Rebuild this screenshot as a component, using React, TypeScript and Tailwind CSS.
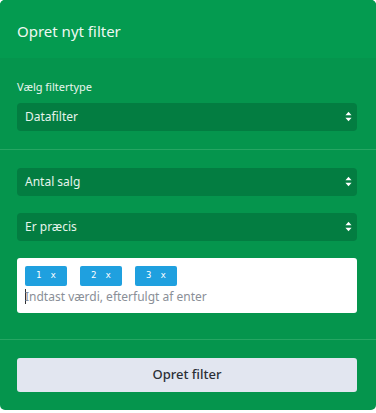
import React from 'react'

const Chevrons = () => (
  <svg viewBox="0 0 8 12" className="h-[11px] w-[7px]" fill="currentColor" aria-hidden="true">
    <path d="M4 0.5 7.5 4.5H0.5Z" />
    <path d="M4 11.5 0.5 7.5H7.5Z" />
  </svg>
)

const Select = ({ label }: { label: string }) => (
  <div className="flex h-[28px] items-center justify-between rounded-[4px] bg-[#037d41] pl-2 pr-[5px] text-[12px] text-[#e6f4ec]">
    <span>{label}</span>
    <span className="text-white">
      <Chevrons />
    </span>
  </div>
)

const Chip = ({ value }: { value: string }) => (
  <span className="inline-flex h-[20px] w-[42px] items-center justify-center gap-[9px] rounded-[2px] bg-[#1fa0df] font-['DejaVu_Sans_Mono',monospace] text-[9px] text-white">
    <span>{value}</span>
    <span>x</span>
  </span>
)

export default function App() {
  return (
    <div className="h-[413px] w-[376px] bg-white font-['Noto_Sans',sans-serif]">
      <div className="h-[410px] w-[376px] overflow-hidden rounded-[5px] bg-[#05954d]">
        <div className="flex h-[58px] items-center bg-[#049b50] pl-[17px] pt-[4px] text-[15px] text-[#eef8f2]">
          Opret nyt filter
        </div>
        <div className="pl-[17px] pr-[19px] pt-[21px] pb-[18px]">
          <div className="mb-[7px] text-[11px] text-[#e8f5ee]">Vælg filtertype</div>
          <Select label="Datafilter" />
        </div>
        <div className="h-px bg-[#26a663]" />
        <div className="flex flex-col gap-[17px] pl-[17px] pr-[19px] pt-[18px] pb-[26px]">
          <Select label="Antal salg" />
          <Select label="Er præcis" />
          <div className="flex h-[55px] flex-col rounded-[3px] bg-white px-2 pt-[8px]">
            <div className="flex gap-[13px]">
              <Chip value="1" />
              <Chip value="2" />
              <Chip value="3" />
            </div>
            <div className="mt-[2px] flex items-center text-[12px] text-[#8a8f97]">
              <span className="mr-[-1px] h-[15px] w-px bg-[#333]" />
              <span>Indtast værdi, efterfulgt af enter</span>
            </div>
          </div>
        </div>
        <div className="h-px bg-[#26a663]" />
        <div className="pl-[17px] pr-[19px] pt-[18px]">
          <button className="flex h-[34px] w-full items-center justify-center rounded-[3px] bg-[#e2e6f0] text-[13px] font-medium text-[#2b2f36]">
            Opret filter
          </button>
        </div>
      </div>
    </div>
  )
}
